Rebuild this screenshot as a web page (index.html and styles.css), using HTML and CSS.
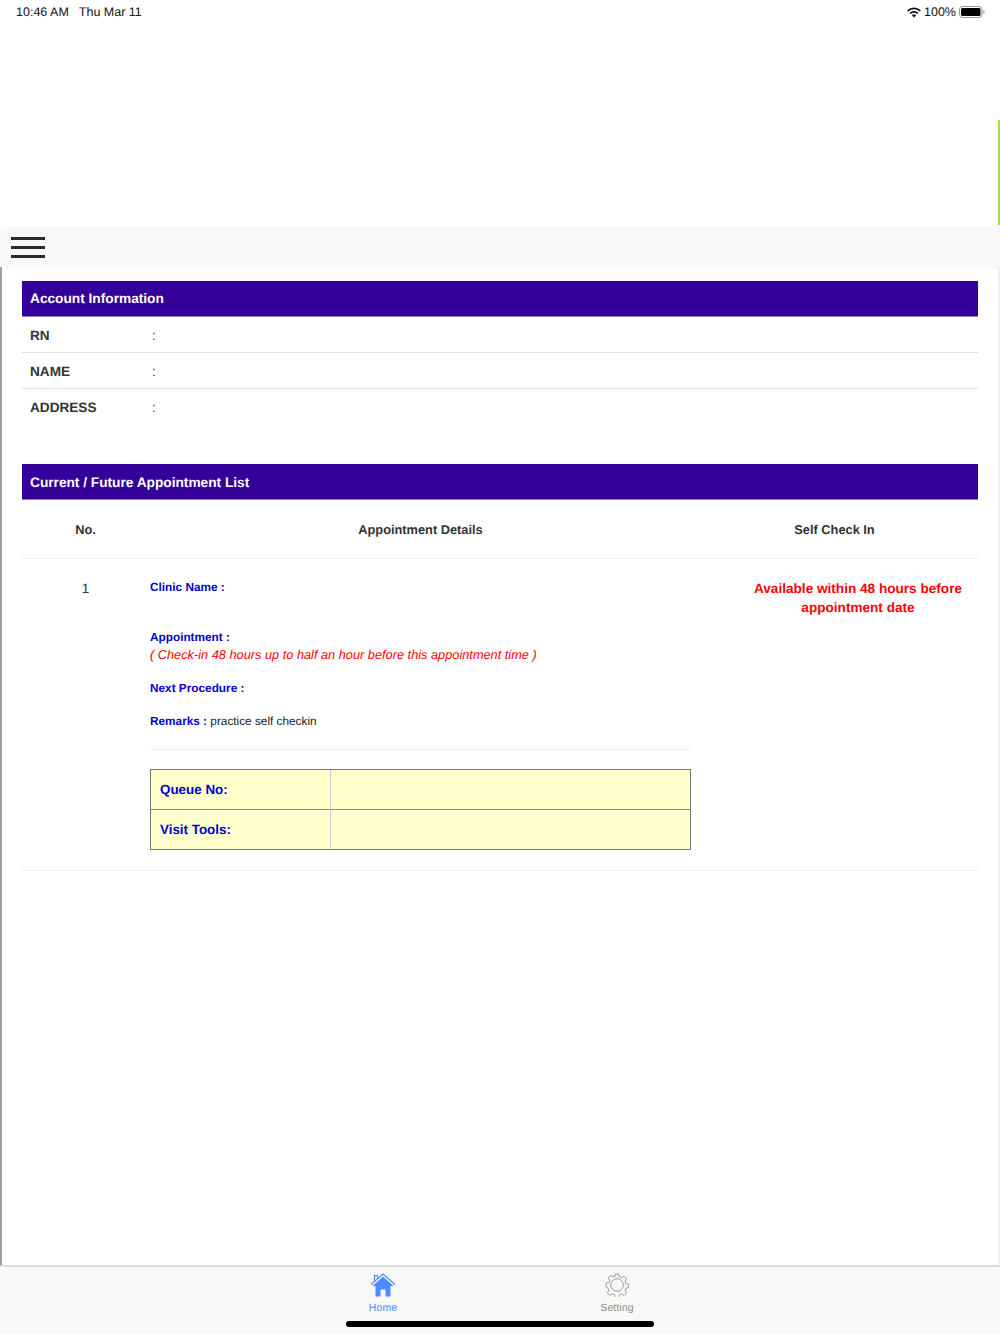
FILE: index.html
```html
<!DOCTYPE html>
<html lang="en">
<head>
<meta charset="utf-8">
<title>Appointments</title>
<link rel="stylesheet" href="styles.css">
</head>
<body>
<div class="app">
  <header class="status">
    <div class="status-left"><span>10:46 AM</span><span>Thu Mar 11</span></div>
    <div class="status-right">
      <svg class="wifi" width="14" height="11" viewBox="0 0 14 11"><path d="M7 10.6 4.9 8.3a3 3 0 0 1 4.2 0zM3.7 7.1 2.5 5.8a6.4 6.4 0 0 1 9 0l-1.200 1.300a4.700 4.700 0 0 0-6.600 0zM1.300 4.600 0.100 3.300a9.800 9.800 0 0 1 13.800 0l-1.200 1.300a8.100 8.100 0 0 0-11.400 0z" fill="#111"/></svg>
      <span>100%</span>
      <svg class="battery" width="26" height="12" viewBox="0 0 26 12"><rect x="0.500" y="0.500" width="22.500" height="11" rx="3" fill="none" stroke="#999"/><rect x="2" y="2" width="19.500" height="8" rx="1.500" fill="#000"/><path d="M24.300 4v4c.7-.3 1.200-1 1.200-2s-.5-1.700-1.200-2z" fill="#999"/></svg>
    </div>
  </header>
  <div class="banner"><div class="banner-line"></div></div>
  <nav class="navbar">
    <div class="burger"><i></i><i></i><i></i></div>
  </nav>
  <main class="content">
    <section class="account">
      <h2 class="section-title">Account Information</h2>
      <div class="info-row"><span class="info-label">RN</span><span>:</span></div>
      <div class="info-row"><span class="info-label">NAME</span><span>:</span></div>
      <div class="info-row info-row-last"><span class="info-label">ADDRESS</span><span>:</span></div>
    </section>
    <section class="appointments">
      <h2 class="section-title section-title-list">Current / Future Appointment List</h2>
      <div class="list-head">
        <div class="col-no">No.</div>
        <div class="col-details">Appointment Details</div>
        <div class="col-check">Self Check In</div>
      </div>
      <div class="list-row">
        <div class="col-no row-no">1</div>
        <div class="col-details details">
          <p class="field field-clinic"><b>Clinic Name :</b></p>
          <p class="field field-appt"><b>Appointment :</b><br><em>( Check-in 48 hours up to half an hour before this appointment time )</em></p>
          <p class="field field-next"><b>Next Procedure :</b></p>
          <p class="field field-remarks"><b>Remarks :</b> practice self checkin</p>
          <hr class="rule">
          <div class="queue">
            <div class="queue-label">Queue No:</div><div class="queue-value"></div>
            <div class="queue-label">Visit Tools:</div><div class="queue-value"></div>
          </div>
        </div>
        <div class="col-check notice">Available within 48 hours before appointment date</div>
      </div>
    </section>
  </main>
  <footer class="tabbar">
    <div class="tabs">
      <div class="tab tab-active">
        <svg width="26" height="24" viewBox="0 0 26 24"><path d="M13 3.500 2.500 13H5.500V23.500H10.500V16.500H15.500V23.500H20.500V13H23.500z" fill="#4c8bff"/><path d="M1 11.500 13 1l12 10.500M4.500 7.500V2.500H7.500V5" fill="none" stroke="#4c8bff" stroke-width="1.200"/></svg>
        <span>Home</span>
      </div>
      <div class="tab">
        <svg width="24" height="24" viewBox="0 0 24 24" fill="none" stroke="#999" stroke-width="1"><path d="M10.200 1h3.600l.6 2.900 2.200.9 2.500-1.600 2.500 2.500-1.600 2.500.9 2.200 2.900.6v3.600l-2.900.6-.9 2.200 1.600 2.500-2.500 2.500-2.500-1.600-2.200.9-.6 2.900h-3.600l-.6-2.900-2.200-.9-2.500 1.600-2.500-2.500 1.600-2.500-.9-2.200L1 13.800v-3.600l2.900-.6.9-2.200-1.600-2.500 2.500-2.500 2.500 1.600 2.200-.9z"/><circle cx="12" cy="12" r="6.300"/></svg>
        <span>Setting</span>
      </div>
    </div>
    <div class="home-bar"></div>
  </footer>
</div>
</body>
</html>
```
FILE: styles.css
```css
* { box-sizing: border-box; }
html, body { margin: 0; padding: 0; }
body { font-family: "Liberation Sans", Arial, sans-serif; background: #fff; color: #333; text-rendering: geometricPrecision; }
.app { width: 1000px; height: 1334px; display: flex; flex-direction: column; overflow: hidden; }
.status { height: 24px; flex: none; display: flex; justify-content: space-between; align-items: center; padding: 0 15px 0 16px; font-size: 12.500px; color: #111; }
.status-left { display: flex; gap: 10px; }
.status-right { display: flex; align-items: center; gap: 3px; }
.banner { height: 203px; flex: none; display: flex; justify-content: flex-end; align-items: flex-end; }
.banner-line { width: 2px; height: 105px; margin-bottom: 2px; background: #a3e23f; }
.navbar { height: 40px; flex: none; background: #f8f8f8; display: flex; align-items: center; padding-left: 10px; margin-left: 1px; position: relative; box-shadow: 0 2px 3px rgba(0, 0, 0, 0.03); }
.burger { width: 34px; display: flex; flex-direction: column; gap: 6px; }
.burger i { display: block; height: 3px; background: #2c2c2c; }
.content { flex: 1; border-left: 2px solid #a0a0a0; border-right: 2px solid #f2f2f2; padding: 14px 20px 0 20px; }
.section-title { margin: 0; height: 36px; line-height: 36px; padding-left: 8px; background: #330099; color: #fff; font-size: 13.700px; font-weight: 700; border-bottom: 1px solid #8f7fc8; }
.section-title-list { line-height: 37px; }
.info-row { height: 36px; display: flex; align-items: center; padding: 1px 0 0 8px; border-bottom: 1px solid #ddd; font-size: 13.600px; color: #333; }
.info-row-last { border-bottom: 0; padding-top: 0; }
.info-label { width: 122px; font-weight: 700; }
.account { margin-bottom: 39px; }
.list-head { display: flex; height: 59px; align-items: center; border-bottom: 1px solid #eee; font-size: 12.800px; font-weight: 700; color: #333; text-align: center; }
.col-no { width: 128px; flex: none; padding-right: 1px; }
.col-details { width: 541px; flex: none; }
.col-check { flex: 1; }
.list-row { display: flex; align-items: flex-start; border-bottom: 1px solid #eee; padding: 20px 0 20px; }
.row-no { text-align: center; font-size: 13.500px; line-height: 18px; padding-top: 1px; }
.details { font-size: 11.800px; color: #222; }
.field { margin: 0; line-height: 17px; }
.field b { color: #0000cc; }
.field em { color: #ff0000; font-size: 12.770px; }
.field-clinic { height: 50px; }
.field-appt { height: 51px; }
.field-next { height: 33px; }
.field-remarks { height: 17px; }
.rule { border: 0; border-top: 1px solid #eee; margin: 19px 0; }
.queue { display: grid; grid-template-columns: 180px 1fr; background: #ffffcc; border: 1px solid #777; margin-left: -0.500px; }
.queue-label, .queue-value { height: 40px; border-bottom: 1px solid #888; }
.queue-label { padding: 1px 0 0 9.500px; line-height: 38px; font-size: 13.400px; font-weight: 700; color: #0000cc; border-right: 1px solid #ccc; }
.queue > :nth-last-child(-n+2) { border-bottom: 0; height: 39px; }
.notice { color: #ff0000; font-size: 13.600px; font-weight: 700; line-height: 19px; text-align: center; padding: 0 15px 0 62px; }
.tabbar { height: 69px; flex: none; background: #f8f8f8; border-top: 2px solid #ddd; position: relative; }
.tabs { display: flex; justify-content: center; gap: 172px; padding-top: 6px; }
.tab { width: 62px; display: flex; flex-direction: column; align-items: center; gap: 5px; font-size: 10.500px; letter-spacing: 0.1px; color: #8e8e8e; }
.tab-active { color: #4c8bff; }
.tab svg { display: block; }
.home-bar { position: absolute; left: 346px; bottom: 7px; width: 308px; height: 6px; background: #000; border-radius: 3px; }
```
